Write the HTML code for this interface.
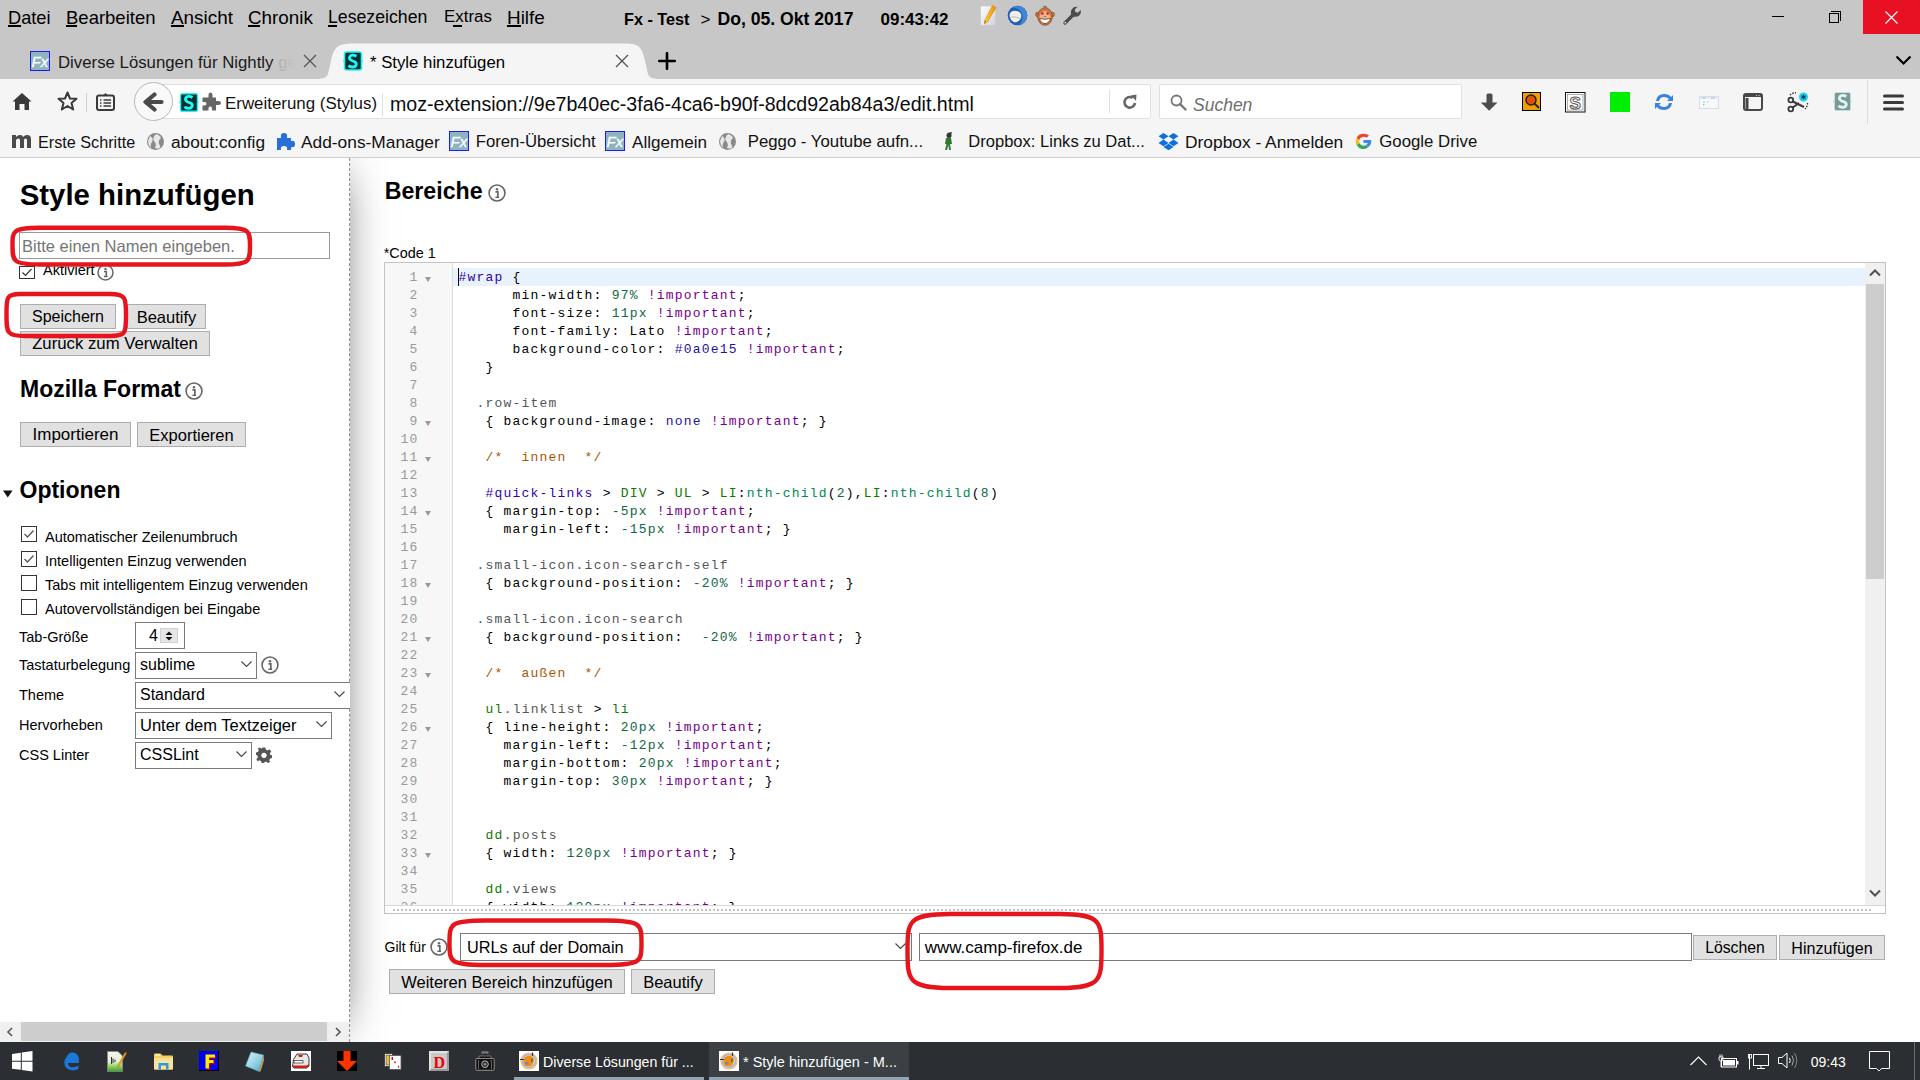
<!DOCTYPE html>
<html><head><meta charset="utf-8">
<style>
*{box-sizing:border-box}
html,body{margin:0;padding:0}
body{width:1920px;height:1080px;overflow:hidden;position:relative;background:#fff;font-family:"Liberation Sans",sans-serif;color:#000}
.a{position:absolute;white-space:nowrap}
.t{line-height:1}
#chrome{position:absolute;left:0;top:0;width:1920px;height:79px;background:#c7c7c7}
#tb{position:absolute;left:0;top:79px;width:1920px;height:79px;background:#f5f5f5;border-bottom:1px solid #cfcfcf}
#content{position:absolute;left:0;top:158px;width:1920px;height:884px;background:#fff}
#taskbar{position:absolute;left:0;top:1042px;width:1920px;height:38px;background:#2b2f33}
.menu{color:#000;top:9.2px}
.btn{position:absolute;background:#e1e1e1;border:1px solid #adadad;font-size:16px;line-height:24.5px;text-align:center;color:#000;white-space:nowrap}
.inp{position:absolute;background:#fff;border:1px solid #7a7a7a}
.code{font-family:"Liberation Mono",monospace;font-size:13px;line-height:18px;letter-spacing:1.2px}
.cb{position:absolute;width:16px;height:16px;border:1px solid #333;background:#fff}
.cb svg{position:absolute;left:0;top:0}
.opt{font-size:14.5px;color:#000}
.sel{font-size:16px;color:#000}
.fold{position:absolute;left:39.5px;width:0;height:0;border-left:3.2px solid transparent;border-right:3.2px solid transparent;border-top:5px solid #999}
.b{color:#30a}.n{color:#164}.k{color:#708}.at{color:#219}.q{color:#555}.tg{color:#170}.v3{color:#085}.cm{color:#a50}
#clip{position:absolute;left:0;top:0;width:1920px;height:1080px;clip-path:inset(158px 0 38px 0)}
</style></head>
<body>
<div id="chrome">
  <div class="a t menu" style="left:8px;font-size:18.2px">Datei</div>
  <div class="a t menu" style="left:66px;font-size:18.5px">Bearbeiten</div>
  <div class="a t menu" style="left:171px;font-size:18.9px">Ansicht</div>
  <div class="a t menu" style="left:248px;font-size:18.85px">Chronik</div>
  <div class="a t menu" style="left:328px;font-size:17.7px">Lesezeichen</div>
  <div class="a t menu" style="left:444px;font-size:16.9px">Extras</div>
  <div class="a t menu" style="left:507px;font-size:18.9px">Hilfe</div>
  <div class="a" style="left:8px;top:25px;width:13px;height:2px;background:#000"></div>
  <div class="a" style="left:66px;top:25px;width:11px;height:2px;background:#000"></div>
  <div class="a" style="left:171px;top:25px;width:13px;height:2px;background:#000"></div>
  <div class="a" style="left:248px;top:25px;width:12px;height:2px;background:#000"></div>
  <div class="a" style="left:328px;top:25px;width:9px;height:2px;background:#000"></div>
  <div class="a" style="left:453px;top:25px;width:9px;height:2px;background:#000"></div>
  <div class="a" style="left:507px;top:25px;width:14px;height:2px;background:#000"></div>
  <div class="a t" style="left:624px;top:10.6px;font-size:16.2px;font-weight:bold">Fx - Test</div>
  <div class="a t" style="left:700.5px;top:10.5px;font-size:17px">&gt;</div>
  <div class="a t" style="left:717.5px;top:10.6px;font-size:17.6px;font-weight:bold">Do, 05. Okt 2017</div>
  <div class="a t" style="left:880.5px;top:10.6px;font-size:17px;font-weight:bold">09:43:42</div>
  <!-- title icons -->
  <svg class="a" style="left:980px;top:5px" width="18" height="22" viewBox="0 0 18 22">
    <defs><linearGradient id="np" x1="0" y1="0" x2="1" y2="1"><stop offset="0" stop-color="#fff"/><stop offset="1" stop-color="#cfd3dc"/></linearGradient>
    <linearGradient id="pc" x1="0" y1="0" x2="1" y2="0"><stop offset="0" stop-color="#ffd23a"/><stop offset="1" stop-color="#f08a00"/></linearGradient></defs>
    <rect x="0.5" y="1" width="15" height="19.5" fill="url(#np)" stroke="#c5c9d2" stroke-width="0.8"/>
    <path d="M12.5 0.5 L16 2.5 L7.5 17 L4.5 19 L4.8 15.5 Z" fill="url(#pc)" stroke="#d77a00" stroke-width="0.5"/>
    <path d="M4.5 19 L4.8 15.5 L6 16.3 Z" fill="#8a5a30"/>
  </svg>
  <svg class="a" style="left:1007px;top:5px" width="21" height="21" viewBox="0 0 21 21">
    <circle cx="10.5" cy="10.5" r="9.8" fill="#1f5fb5"/>
    <path d="M10.5 0.7 A9.8 9.8 0 0 1 20.3 10.5 A9.8 9.8 0 0 1 12 20.2 Q17 15 15 9 Q13 3 6 2.5 Q8 0.7 10.5 0.7 Z" fill="#3f86d8"/>
    <path d="M2.5 10 Q3 6.5 6 6 Q9 5 12.5 7 Q15.5 9.5 13.5 14 Q11 18 7 17 Q3 15.5 2.5 10 Z" fill="#f2efe8"/>
    <path d="M3.5 12.5 Q7 11 10 12.5 Q12.5 13.5 13.5 14" fill="none" stroke="#b9b4aa" stroke-width="0.9"/>
  </svg>
  <svg class="a" style="left:1035px;top:5px" width="20" height="21" viewBox="0 0 20 21">
    <path d="M8 2 L9 0.5 L10 2 L11 0.5 L12 2.5 Z" fill="#8a4a20"/>
    <circle cx="2.8" cy="9.5" r="2.3" fill="#c87a45" stroke="#7a3d15" stroke-width="0.6"/>
    <circle cx="17.2" cy="9.5" r="2.3" fill="#c87a45" stroke="#7a3d15" stroke-width="0.6"/>
    <ellipse cx="10" cy="11.5" rx="7.3" ry="8.8" fill="#c87a45" stroke="#7a3d15" stroke-width="0.7"/>
    <ellipse cx="10" cy="12.5" rx="5.5" ry="6.5" fill="#e8b48a"/>
    <circle cx="7.3" cy="8.5" r="1.2" fill="#f01010"/><circle cx="12.7" cy="8.5" r="1.2" fill="#f01010"/>
    <path d="M9 11 H11 L10 12 Z" fill="#6a3510"/>
    <path d="M4.5 13.5 Q10 15 15.5 13.5 Q14 18.5 10 18.5 Q6 18.5 4.5 13.5 Z" fill="#fff" stroke="#6a3510" stroke-width="0.8"/>
  </svg>
  <svg class="a" style="left:1063px;top:6px" width="19" height="19" viewBox="0 0 19 19">
    <path d="M2 17 L10 9" stroke="#4a4a4a" stroke-width="3.2" stroke-linecap="round"/>
    <path d="M8.2 8.5 Q7 4 10.5 1.5 Q12.5 0.3 14.5 0.8 L11.8 3.5 L12.3 6 L14.8 6.8 L17.8 4 Q18.5 7 16.5 9.2 Q13.8 11.5 10.3 10.5 Z" fill="#4a4a4a"/>
    <circle cx="2.3" cy="16.7" r="0.9" fill="#ddd"/>
  </svg>
  <!-- window controls -->
  <div class="a" style="left:1772px;top:16px;width:12px;height:1px;background:#000"></div>
  <div class="a" style="left:1831px;top:11px;width:10px;height:10px;border:1px solid #000;border-left:none;border-bottom:none"></div>
  <div class="a" style="left:1829px;top:13px;width:10px;height:10px;border:1px solid #000;background:#c7c7c7"></div>
  <div class="a" style="left:1863px;top:0;width:57px;height:34px;background:#e81123"></div>
  <svg class="a" style="left:1885px;top:11px" width="13" height="13" viewBox="0 0 13 13"><path d="M0.5 0.5 L12.5 12.5 M12.5 0.5 L0.5 12.5" stroke="#fff" stroke-width="1.2"/></svg>
  <!-- tabs -->
  <svg class="a" style="left:30px;top:51px" width="20" height="20" viewBox="0 0 20 20">
    <rect x="0.5" y="0.5" width="19" height="19" fill="#8db4bf" stroke="#1a1aff" stroke-width="1"/>
    <text x="1.5" y="15.5" font-family="Liberation Sans" font-style="italic" font-size="15" fill="#fff" stroke="#fff" stroke-width="0.3">Fx</text>
  </svg>
  <div class="a t" style="left:58px;top:54.6px;font-size:16.8px;color:#1a1a1a">Diverse Lösungen für Nightly <span style="color:#b0b0b0">ge</span></div>
  <div class="a" style="left:280px;top:45px;width:20px;height:30px;background:linear-gradient(to right,rgba(199,199,199,0),#c7c7c7 80%)"></div>
  <svg class="a" style="left:303px;top:54px" width="14" height="14" viewBox="0 0 14 14"><path d="M1 1 L13 13 M13 1 L1 13" stroke="#555" stroke-width="1.3"/></svg>
  <svg class="a" style="left:300px;top:43px" width="380" height="36" viewBox="0 0 380 36">
    <path d="M15 36 C30 36 27 33 31 18 C34 4 38 0.5 52 0.5 L325 0.5 C339 0.5 342 4 345 18 C349 33 346 36 361 36 Z" fill="#f5f5f5"/>
  </svg>
  <svg class="a" style="left:343px;top:51px" width="20" height="20" viewBox="0 0 20 20">
    <rect x="1.5" y="1" width="17" height="18" rx="2" fill="#053030" stroke="#20f5f5" stroke-width="1.6"/>
    <path d="M0 10 L2 10 M18 10 L20 10" stroke="#20f5f5" stroke-width="1.6"/>
    <path d="M13.5 5.2 Q10.5 3.5 7.8 4.5 Q5.8 6 6.8 8.2 Q8 9.7 11 10.5 Q13.5 11.5 13.3 13.5 Q12.8 16 9.5 16 Q7 16 5.5 14.5" fill="none" stroke="#22f8f8" stroke-width="2.8"/>
  </svg>
  <div class="a t" style="left:370px;top:54.6px;font-size:16.75px;color:#000">* Style hinzufügen</div>
  <svg class="a" style="left:615px;top:54px" width="14" height="14" viewBox="0 0 14 14"><path d="M1 1 L13 13 M13 1 L1 13" stroke="#555" stroke-width="1.3"/></svg>
  <svg class="a" style="left:658px;top:52px" width="18" height="18" viewBox="0 0 18 18"><path d="M9 1.2 V16.8 M1.2 9 H16.8" stroke="#000" stroke-width="2.6" stroke-linecap="round"/></svg>
  <svg class="a" style="left:1895px;top:54px" width="17" height="12" viewBox="0 0 17 12"><path d="M1.5 2.5 L8.5 9.5 L15.5 2.5" fill="none" stroke="#000" stroke-width="2.2"/></svg>
</div>
<div id="tb">
  <!-- home -->
  <svg class="a" style="left:12px;top:13px" width="20" height="19" viewBox="0 0 20 19">
    <path d="M10 1 L19.5 9.5 L17 9.5 L17 18 L12.5 18 L12.5 12 L7.5 12 L7.5 18 L3 18 L3 9.5 L0.5 9.5 Z" fill="#3a3a3a"/>
  </svg>
  <!-- star -->
  <svg class="a" style="left:57px;top:12px" width="21" height="20" viewBox="0 0 21 20">
    <path d="M10.5 1.5 L13 7.5 L19.5 7.8 L14.5 12 L16.2 18.5 L10.5 15 L4.8 18.5 L6.5 12 L1.5 7.8 L8 7.5 Z" fill="none" stroke="#3a3a3a" stroke-width="2" stroke-linejoin="round"/>
  </svg>
  <div class="a" style="left:86px;top:14px;width:1px;height:19px;background:#cfcfcf"></div>
  <!-- library -->
  <svg class="a" style="left:96px;top:13px" width="19" height="19" viewBox="0 0 19 19">
    <rect x="1" y="3.5" width="17" height="14.5" rx="2" fill="none" stroke="#3a3a3a" stroke-width="2"/>
    <path d="M7 3.5 L9.5 1 L12 3.5" fill="#3a3a3a"/>
    <path d="M4 8 H5.5 M7.5 8 H15 M4 11 H5.5 M7.5 11 H15 M4 14 H5.5 M7.5 14 H15" stroke="#3a3a3a" stroke-width="1.6"/>
  </svg>
  <!-- url bar -->
  <div class="a" style="left:160px;top:5px;width:991px;height:35px;background:#fff;border:1px solid #e0e0e0;border-radius:2px"></div>
  <div class="a" style="left:134px;top:3px;width:39px;height:39px;border-radius:50%;background:#f9f9f9;border:1px solid #b9b9b9"></div>
  <svg class="a" style="left:140px;top:13px" width="26" height="22" viewBox="0 0 26 22">
    <path d="M14.5 2.5 L5.5 10 L14.5 17.5 M6.5 10 H21.5" fill="none" stroke="#4a4a4a" stroke-width="4.2" stroke-linecap="round" stroke-linejoin="round"/>
  </svg>
  <svg class="a" style="left:179px;top:14px" width="20" height="19" viewBox="0 0 20 19">
    <rect x="1.5" y="0.8" width="17" height="17.4" rx="1.5" fill="#053030" stroke="#20f5f5" stroke-width="1.4"/>
    <path d="M0 9 L2 9 M18 9 L20 9" stroke="#20f5f5" stroke-width="1.6"/>
    <path d="M13.5 4.5 Q10.5 2.8 7.8 3.8 Q5.8 5.2 6.8 7.5 Q8 9 11 9.8 Q13.5 10.8 13.3 12.8 Q12.8 15.3 9.5 15.3 Q7 15.3 5.5 13.8" fill="none" stroke="#22f8f8" stroke-width="2.8"/>
  </svg>
  <svg class="a" style="left:202px;top:13px" width="20" height="20" viewBox="0 0 20 20">
    <path d="M0.5 5.5 H6.5 V3 Q6.5 0.5 8.5 0.5 Q10.5 0.5 10.5 3 V5.5 H14 V9 H16.5 Q19 9 19 11 Q19 13 16.5 13 H14 V18.5 H10 V16.5 Q10 14.5 8.2 14.5 Q6.5 14.5 6.5 16.5 V18.5 H0.5 V13.5 H2.5 Q4.5 13.5 4.5 11.8 Q4.5 10 2.5 10 H0.5 Z" fill="#666"/>
  </svg>
  <div class="a t" style="left:225px;top:16.6px;font-size:16.9px;color:#111">Erweiterung (Stylus)</div>
  <div class="a" style="left:382px;top:14px;width:1px;height:24px;background:#e0e0e0"></div>
  <div class="a t" style="left:390px;top:15.6px;font-size:19.6px;color:#0c0c0d">moz-extension://9e7b40ec-3fa6-4ca6-b90f-8dcd92ab84a3/edit.html</div>
  <div class="a" style="left:1109px;top:11px;width:1px;height:23px;background:#e0e0e0"></div>
  <svg class="a" style="left:1122px;top:15px" width="16" height="16" viewBox="0 0 16 16">
    <path d="M13 9 A5.3 5.3 0 1 1 10.5 3.8" fill="none" stroke="#666" stroke-width="2.6"/>
    <path d="M8.5 1.5 L14.5 0.5 L14 6.8 Z" fill="#666"/>
  </svg>
  <!-- search -->
  <div class="a" style="left:1159px;top:5px;width:303px;height:35px;background:#fff;border:1px solid #e0e0e0;border-radius:2px"></div>
  <svg class="a" style="left:1170px;top:15px" width="17" height="17" viewBox="0 0 17 17">
    <circle cx="6.5" cy="6.5" r="5" fill="none" stroke="#777" stroke-width="1.8"/>
    <path d="M10 10 L15.5 15.5" stroke="#777" stroke-width="2.4" stroke-linecap="round"/>
  </svg>
  <div class="a t" style="left:1193px;top:18.2px;font-size:17.5px;font-style:italic;color:#6d6d6d">Suchen</div>
  <!-- right icons -->
  <svg class="a" style="left:1480px;top:14px" width="19" height="19" viewBox="0 0 19 19">
    <path d="M6.5 2 Q6.5 0.5 8 0.5 H11 Q12.5 0.5 12.5 2 V9.5 H17.5 L9.2 17.8 L0.8 9.5 H6.5 Z" fill="#4d4d4d"/>
  </svg>
  <svg class="a" style="left:1522px;top:13px" width="20" height="19" viewBox="0 0 20 19">
    <rect x="0.5" y="0.5" width="18" height="18" fill="#f0a000" stroke="#000" stroke-width="1"/>
    <circle cx="9" cy="8" r="5" fill="#e05000" stroke="#222" stroke-width="1.5"/>
    <path d="M12.5 11.5 L17 16" stroke="#222" stroke-width="2"/>
  </svg>
  <svg class="a" style="left:1565px;top:13px" width="21" height="21" viewBox="0 0 21 21">
    <rect x="0.5" y="0.5" width="19.5" height="19.5" fill="#fff" stroke="#111" stroke-width="1"/>
    <rect x="2.5" y="2.5" width="15.5" height="15.5" fill="none" stroke="#999" stroke-width="0.8"/>
    <text x="4.5" y="16.5" font-family="Liberation Sans" font-weight="bold" font-size="17" fill="#fff" stroke="#555" stroke-width="1">S</text>
  </svg>
  <div class="a" style="left:1610px;top:13px;width:20px;height:20px;background:#00ee00"></div>
  <svg class="a" style="left:1653px;top:13px" width="22" height="20" viewBox="0 0 22 20">
    <path d="M3 9 Q4 2 11 2 Q16 2 18 5 L20 3 L20 9 L14 9 L16 7 Q14 5 11 5 Q7 5 6 9 Z" fill="#3b82e0"/>
    <path d="M19 11 Q18 18 11 18 Q6 18 4 15 L2 17 L2 11 L8 11 L6 13 Q8 15 11 15 Q15 15 16 11 Z" fill="#3b82e0"/>
  </svg>
  <svg class="a" style="left:1699px;top:17px" width="20" height="13" viewBox="0 0 20 13">
    <rect x="0.5" y="0.5" width="19" height="12" fill="#f7f9fc" stroke="#d8dde6" stroke-width="1"/>
    <rect x="1" y="1" width="18" height="2" fill="#e3ecf8"/>
    <path d="M3 2 H7 M12 2 H16" stroke="#9ab5dd" stroke-width="0.8"/>
    <path d="M4 6 H6 M4 8.5 H5.5" stroke="#7fcf7f" stroke-width="1"/>
    <path d="M8 6 H10" stroke="#f0b0a0" stroke-width="0.8"/>
  </svg>
  <svg class="a" style="left:1743px;top:14px" width="20" height="18" viewBox="0 0 20 18">
    <rect x="1" y="1" width="18" height="16" rx="2" fill="none" stroke="#474747" stroke-width="2"/>
    <rect x="1" y="1" width="18" height="3" fill="#474747"/>
    <rect x="2.5" y="5" width="3" height="11" fill="#474747"/>
    <path d="M13 2.5 H14 M15.5 2.5 H16.5" stroke="#ddd" stroke-width="1"/>
  </svg>
  <svg class="a" style="left:1787px;top:13px" width="22" height="21" viewBox="0 0 22 21">
    <circle cx="3.8" cy="8" r="2.4" fill="none" stroke="#3a3a3a" stroke-width="1.8"/>
    <circle cx="3.8" cy="17" r="2.4" fill="none" stroke="#3a3a3a" stroke-width="1.8"/>
    <path d="M5.8 9.5 L17 15 M5.8 15.5 L12 11" stroke="#3a3a3a" stroke-width="2"/>
    <path d="M3 3 A9 9 0 0 1 9 0.8" fill="none" stroke="#3a3a3a" stroke-width="1.5" stroke-dasharray="1.5 1.2"/>
    <path d="M20.5 11 A9 9 0 0 1 18 17" fill="none" stroke="#3a3a3a" stroke-width="1.5" stroke-dasharray="1.5 1.2"/>
    <circle cx="16.5" cy="5" r="4.5" fill="#19d4f0"/>
    <path d="M16.5 2.6 V7.4 M14.4 3.8 L18.6 6.2 M14.4 6.2 L18.6 3.8" stroke="#0a3a50" stroke-width="1.1"/>
  </svg>
  <svg class="a" style="left:1833px;top:13px" width="19" height="19" viewBox="0 0 19 19">
    <rect x="1.5" y="0.5" width="16" height="18" rx="1.5" fill="#7d9896" stroke="#c8f0f0" stroke-width="0.6"/>
    <path d="M0 9.5 H1.5 M17.5 9.5 H19" stroke="#a8dcdc" stroke-width="1.4"/>
    <path d="M13.3 4.5 Q10.5 2.8 7.8 3.8 Q5.8 5.2 6.8 7.5 Q8 9 11 9.8 Q13.5 10.8 13.3 12.8 Q12.8 15.3 9.5 15.3 Q7 15.3 5.5 13.8" fill="none" stroke="#dff6f6" stroke-width="2.8"/>
  </svg>
  <div class="a" style="left:1867px;top:1px;width:1px;height:44px;background:#dcdcdc"></div>
  <svg class="a" style="left:1883px;top:15px" width="21" height="17" viewBox="0 0 21 17">
    <path d="M1.5 2 H19.5 M1.5 8.5 H19.5 M1.5 15 H19.5" stroke="#3a3a3a" stroke-width="3" stroke-linecap="round"/>
  </svg>
  <!-- bookmarks -->
  <svg class="a" style="left:11px;top:54px" width="21" height="16" viewBox="0 0 21 16">
    <path d="M1 15 V2 H5 V4 Q7 1.5 10 2 Q11.5 2.5 12 4 Q14 1.5 17 2 Q20 2.5 20 6 V15 H16 V7 Q16 5.5 14.5 5.5 Q13 5.5 13 7 V15 H9 V7 Q9 5.5 7.5 5.5 Q5 5.5 5 7.5 V15 Z" fill="#4a4a4a"/>
  </svg>
  <div class="a t" style="left:38px;top:55.4px;font-size:16.2px;color:#111">Erste Schritte</div>
  <svg class="a" style="left:146px;top:53px" width="19" height="19" viewBox="0 0 19 19">
    <circle cx="9.5" cy="9.5" r="8.5" fill="#8a8a8a"/>
    <path d="M4 4 Q8 6 6 10 Q4 12 5 16 Q2 13 2 9 Z M10 2 Q14 3 15 6 Q12 8 13 12 Q15 14 14 16 Q11 17 9 16 Q11 12 8 9 Q6 6 10 2 Z" fill="#e8e8e8"/>
  </svg>
  <div class="a t" style="left:171px;top:55.4px;font-size:17.25px;color:#111">about:config</div>
  <svg class="a" style="left:276px;top:53px" width="19" height="19" viewBox="0 0 19 19">
    <path d="M1 6 H5 Q4 1 8 1 Q12 1 11 6 H15 V9 Q19 8 19 12 Q19 16 15 15 V18 H11 Q12 14 8 14 Q4 14 5 18 H1 Z" fill="#2a6fd6"/>
  </svg>
  <div class="a t" style="left:301px;top:55.4px;font-size:17.33px;color:#111">Add-ons-Manager</div>
  <svg class="a" style="left:449px;top:52px" width="20" height="20" viewBox="0 0 20 20">
    <rect x="0.5" y="0.5" width="19" height="19" fill="#8db4bf" stroke="#1a1aff" stroke-width="1"/>
    <text x="1.5" y="15.5" font-family="Liberation Sans" font-style="italic" font-size="15" fill="#fff" stroke="#fff" stroke-width="0.3">Fx</text>
  </svg>
  <div class="a t" style="left:475.7px;top:55.4px;font-size:16.74px;color:#111">Foren-Übersicht</div>
  <svg class="a" style="left:605px;top:52px" width="20" height="20" viewBox="0 0 20 20">
    <rect x="0.5" y="0.5" width="19" height="19" fill="#8db4bf" stroke="#1a1aff" stroke-width="1"/>
    <text x="1.5" y="15.5" font-family="Liberation Sans" font-style="italic" font-size="15" fill="#fff" stroke="#fff" stroke-width="0.3">Fx</text>
  </svg>
  <div class="a t" style="left:632px;top:55.4px;font-size:17.08px;color:#111">Allgemein</div>
  <svg class="a" style="left:718px;top:53px" width="19" height="19" viewBox="0 0 19 19">
    <circle cx="9.5" cy="9.5" r="8.5" fill="#8a8a8a"/>
    <path d="M4 4 Q8 6 6 10 Q4 12 5 16 Q2 13 2 9 Z M10 2 Q14 3 15 6 Q12 8 13 12 Q15 14 14 16 Q11 17 9 16 Q11 12 8 9 Q6 6 10 2 Z" fill="#e8e8e8"/>
  </svg>
  <div class="a t" style="left:747.7px;top:55.4px;font-size:16.8px;color:#111">Peggo - Youtube aufn...</div>
  <svg class="a" style="left:941px;top:53px" width="15" height="19" viewBox="0 0 15 19">
    <circle cx="8" cy="3.5" r="2.5" fill="#333"/>
    <path d="M5 6 H10 L11 12 L9 12 L10 18 H8 L7.5 13 L6 18 H4 L5.5 12 L4 12 Z" fill="#2f7a2f"/>
    <path d="M6 1 L11 0 L10 3" fill="#333"/>
  </svg>
  <div class="a t" style="left:968.3px;top:55.4px;font-size:16.56px;color:#111">Dropbox: Links zu Dat...</div>
  <svg class="a" style="left:1158px;top:53px" width="21" height="19" viewBox="0 0 21 19">
    <path d="M5.5 1 L10.5 4.3 L5.5 7.6 L0.5 4.3 Z M15.5 1 L20.5 4.3 L15.5 7.6 L10.5 4.3 Z M5.5 7.6 L10.5 10.9 L5.5 14.2 L0.5 10.9 Z M15.5 7.6 L20.5 10.9 L15.5 14.2 L10.5 10.9 Z M5.5 15 L10.5 11.8 L15.5 15 L10.5 18.2 Z" fill="#0d6fe0"/>
  </svg>
  <div class="a t" style="left:1185px;top:55.4px;font-size:17.36px;color:#111">Dropbox - Anmelden</div>
  <svg class="a" style="left:1355px;top:54px" width="17" height="17" viewBox="0 0 17 17">
    <path d="M15.8 7 H8.5 V10 H12.7 Q11.8 13.5 8.5 13.5 Q4.5 13.5 4 8.5 Q4 3.5 8.5 3.3 Q10.5 3.3 11.8 4.6 L14 2.4 Q11.8 0.5 8.5 0.5" fill="none" stroke="#4285f4" stroke-width="0"/>
    <path d="M8.5 0.8 A7.7 7.7 0 0 0 1.6 5 L4.3 7 A4.7 4.7 0 0 1 11.7 4.8 L14 2.6 A7.7 7.7 0 0 0 8.5 0.8 Z" fill="#ea4335"/>
    <path d="M1.6 5 A7.7 7.7 0 0 0 1.6 12 L4.3 10 A4.7 4.7 0 0 1 4.3 7 Z" fill="#fbbc05"/>
    <path d="M1.6 12 A7.7 7.7 0 0 0 13.5 14 L11 12 A4.7 4.7 0 0 1 4.3 10 Z" fill="#34a853"/>
    <path d="M13.5 14 A7.7 7.7 0 0 0 16.2 7 H8.5 V10 H12.8 A4.7 4.7 0 0 1 11 12 Z" fill="#4285f4"/>
  </svg>
  <div class="a t" style="left:1379.3px;top:55.4px;font-size:16.79px;color:#111">Google Drive</div>
</div>
<div id="content"></div>
<div id="clip">
<!-- left panel -->
<div class="a" id="lp" style="left:0;top:158px;width:350px;height:884px;background:#fff;border-right:1px dashed #8e8e8e;box-shadow:0 0 48px -19px #000"></div>
<div class="a t" style="left:19.7px;top:180px;font-size:29.4px;font-weight:bold">Style hinzufügen</div>
<div class="inp" style="left:19px;top:232px;width:311px;height:27px;border-color:#999"></div>
<div class="a t" style="left:22px;top:237.6px;font-size:16.5px;color:#757575">Bitte einen Namen eingeben.</div>
<div class="a" style="left:19px;top:266px;width:16px;height:13px;border:1px solid #333;background:#fff"></div>
<svg class="a" style="left:21px;top:267px" width="12" height="11" viewBox="0 0 12 11"><path d="M1.5 5.5 L4.5 8.5 L10.5 2" fill="none" stroke="#333" stroke-width="1.2"/></svg>
<div class="a t" style="left:43px;top:263px;font-size:14.5px;color:#000">Aktiviert</div>
<svg class="a info" style="left:97px;top:264px" width="17" height="17" viewBox="0 0 17 17"><circle cx="8.5" cy="8.5" r="7.5" fill="none" stroke="#666" stroke-width="1.5"/><circle cx="8.5" cy="5" r="1.2" fill="#666"/><path d="M7 7.5 H9.3 V12 M7 12.5 H10.5" stroke="#666" stroke-width="1.6" fill="none"/></svg>

<div class="btn" style="left:20px;top:304px;width:96px;height:25px">Speichern</div>
<div class="btn" style="left:127px;top:304px;width:79px;height:25px;font-size:16.5px">Beautify</div>
<div class="btn" style="left:20px;top:331px;width:190px;height:25px;font-size:16.76px">Zurück zum Verwalten</div>

<div class="a t" style="left:20px;top:377.5px;font-size:23px;font-weight:bold">Mozilla Format</div>
<svg class="a info" style="left:185px;top:382px" width="18" height="18" viewBox="0 0 17 17"><circle cx="8.5" cy="8.5" r="7.5" fill="none" stroke="#666" stroke-width="1.5"/><circle cx="8.5" cy="5" r="1.2" fill="#666"/><path d="M7 7.5 H9.3 V12 M7 12.5 H10.5" stroke="#666" stroke-width="1.6" fill="none"/></svg>
<div class="btn" style="left:20px;top:422px;width:111px;height:25px;font-size:17px">Importieren</div>
<div class="btn" style="left:137px;top:422px;width:109px;height:25px;font-size:16.5px">Exportieren</div>

<svg class="a" style="left:3px;top:490px" width="10" height="8" viewBox="0 0 10 8"><path d="M0 0.5 H9.5 L4.75 7.5 Z" fill="#111"/></svg>
<div class="a t" style="left:19.5px;top:478.8px;font-size:23px;font-weight:bold">Optionen</div>

<div class="cb" style="left:21px;top:526px"><svg width="14" height="14" viewBox="0 0 14 14"><path d="M2.5 7 L5.5 10 L11.5 3.5" fill="none" stroke="#555" stroke-width="1.3"/></svg></div>
<div class="cb" style="left:21px;top:551px"><svg width="14" height="14" viewBox="0 0 14 14"><path d="M2.5 7 L5.5 10 L11.5 3.5" fill="none" stroke="#555" stroke-width="1.3"/></svg></div>
<div class="cb" style="left:21px;top:575px"></div>
<div class="cb" style="left:21px;top:599px"></div>
<div class="a t opt" style="left:45px;top:529.7px">Automatischer Zeilenumbruch</div>
<div class="a t opt" style="left:45px;top:554.4px">Intelligenten Einzug verwenden</div>
<div class="a t opt" style="left:45px;top:578px">Tabs mit intelligentem Einzug verwenden</div>
<div class="a t opt" style="left:45px;top:601.9px">Autovervollständigen bei Eingabe</div>

<div class="a t opt" style="left:19px;top:629.9px">Tab-Größe</div>
<div class="a t opt" style="left:19px;top:658px">Tastaturbelegung</div>
<div class="a t opt" style="left:19px;top:687.7px">Theme</div>
<div class="a t opt" style="left:19px;top:717.5px">Hervorheben</div>
<div class="a t opt" style="left:19px;top:747.5px">CSS Linter</div>

<div class="inp" style="left:135px;top:622px;width:50px;height:27px"></div>
<div class="a t sel" style="left:149px;top:627.5px">4</div>
<div class="a" style="left:160px;top:628px;width:18px;height:15px;background:#e6e6e6;border:1px solid #d0d0d0"></div>
<svg class="a" style="left:162px;top:629px" width="14" height="14" viewBox="0 0 14 14"><path d="M3.5 6 L7 2.5 L10.5 6 Z M3.5 8 L7 11.5 L10.5 8 Z" fill="#111"/></svg>

<div class="inp" style="left:135px;top:652px;width:122px;height:27px"></div>
<div class="a t sel" style="left:140px;top:656.6px">sublime</div>
<svg class="a chev" style="left:241px;top:661px" width="11" height="7" viewBox="0 0 11 7"><path d="M0.5 0.5 L5.5 5.5 L10.5 0.5" fill="none" stroke="#444" stroke-width="1.1"/></svg>
<svg class="a info" style="left:261px;top:656px" width="18" height="18" viewBox="0 0 17 17"><circle cx="8.5" cy="8.5" r="7.5" fill="none" stroke="#666" stroke-width="1.5"/><circle cx="8.5" cy="5" r="1.2" fill="#666"/><path d="M7 7.5 H9.3 V12 M7 12.5 H10.5" stroke="#666" stroke-width="1.6" fill="none"/></svg>

<div class="inp" style="left:135px;top:682px;width:215px;height:27px;border-right:none"></div>
<div class="a t sel" style="left:140px;top:686.6px">Standard</div>
<svg class="a chev" style="left:334px;top:691px" width="11" height="7" viewBox="0 0 11 7"><path d="M0.5 0.5 L5.5 5.5 L10.5 0.5" fill="none" stroke="#444" stroke-width="1.1"/></svg>

<div class="inp" style="left:135px;top:712px;width:197px;height:27px"></div>
<div class="a t sel" style="left:140px;top:716.6px;font-size:16.5px">Unter dem Textzeiger</div>
<svg class="a chev" style="left:316px;top:721px" width="11" height="7" viewBox="0 0 11 7"><path d="M0.5 0.5 L5.5 5.5 L10.5 0.5" fill="none" stroke="#444" stroke-width="1.1"/></svg>

<div class="inp" style="left:135px;top:742px;width:117px;height:27px"></div>
<div class="a t sel" style="left:140px;top:746.6px">CSSLint</div>
<svg class="a chev" style="left:236px;top:751px" width="11" height="7" viewBox="0 0 11 7"><path d="M0.5 0.5 L5.5 5.5 L10.5 0.5" fill="none" stroke="#444" stroke-width="1.1"/></svg>
<svg class="a" style="left:256px;top:747px" width="16" height="16" viewBox="0 0 16 16">
  <path d="M6.6 0.5 H9.4 L9.8 2.6 L11.5 3.5 L13.4 2.3 L15.3 4.4 L13.9 6.2 L14.4 7.9 L16 8.3 V11 L14.1 11.5 L13.3 13.2 L14.1 15 L11.8 16 L10.2 14.6 L8.5 15.2 L7.8 16 H5.6 L5.2 14.3 L3.4 13.3 L1.5 14.2 L0.4 12.1 L1.8 10.5 L1.5 8.6 L0 8 V5.5 L1.9 5 L2.8 3.3 L1.9 1.5 L4 0.4 L5.5 1.7 Z" fill="#555"/>
  <circle cx="8" cy="8.3" r="2.6" fill="#fff"/>
</svg>
<!-- scrollbar bottom of left panel -->
<div class="a" style="left:0;top:1022px;width:349px;height:20px;background:#f0f0f0"></div>
<div class="a" style="left:21px;top:1022px;width:306px;height:19px;background:#cdcdcd"></div>
<svg class="a" style="left:5px;top:1027px" width="10" height="10" viewBox="0 0 10 10"><path d="M7 1 L3 5 L7 9" fill="none" stroke="#555" stroke-width="1.6"/></svg>
<svg class="a" style="left:333px;top:1027px" width="10" height="10" viewBox="0 0 10 10"><path d="M3 1 L7 5 L3 9" fill="none" stroke="#555" stroke-width="1.6"/></svg>

<!-- right side -->
<div class="a t" style="left:384.7px;top:180.2px;font-size:23.2px;font-weight:bold">Bereiche</div>
<svg class="a info" style="left:488px;top:184px" width="18" height="18" viewBox="0 0 17 17"><circle cx="8.5" cy="8.5" r="7.5" fill="none" stroke="#666" stroke-width="1.5"/><circle cx="8.5" cy="5" r="1.2" fill="#666"/><path d="M7 7.5 H9.3 V12 M7 12.5 H10.5" stroke="#666" stroke-width="1.6" fill="none"/></svg>
<div class="a t" style="left:383.7px;top:245.8px;font-size:14.4px">*Code 1</div>

<div class="a" style="left:384px;top:262px;width:1502px;height:652px;border:1px solid #c3c3c3;background:#fff"></div>
<div class="a" style="left:385px;top:263px;width:68px;height:642px;background:#f7f7f7;border-right:1px solid #ddd"></div>
<div class="a" style="left:453px;top:268px;width:1412px;height:18px;background:#e8f2ff"></div>
<div class="a" style="left:458px;top:268px;width:1px;height:18px;background:#000"></div>
<div class="a" style="left:385px;top:263px;width:1480px;height:642px;overflow:hidden">
  <div class="a code lnum" style="left:0;top:5.5px;width:33.6px;text-align:right;white-space:pre;color:#999">1
2
3
4
5
6
7
8
9
10
11
12
13
14
15
16
17
18
19
20
21
22
23
24
25
26
27
28
29
30
31
32
33
34
35
36</div>
  <div class="fold" style="top:14px"></div><div class="fold" style="top:158px"></div><div class="fold" style="top:194px"></div><div class="fold" style="top:248px"></div><div class="fold" style="top:320px"></div><div class="fold" style="top:374px"></div><div class="fold" style="top:410px"></div><div class="fold" style="top:464px"></div><div class="fold" style="top:590px"></div><div class="fold" style="top:644px"></div>
  <div class="a code" style="left:73.6px;top:5.5px;white-space:pre;color:#000"><span class="b">#wrap</span> {
      min-width: <span class="n">97%</span> <span class="k">!important</span>;
      font-size: <span class="n">11px</span> <span class="k">!important</span>;
      font-family: Lato <span class="k">!important</span>;
      background-color: <span class="at">#0a0e15</span> <span class="k">!important</span>;
   }

  <span class="q">.row-item</span>
   { background-image: <span class="at">none</span> <span class="k">!important</span>; }

   <span class="cm">/*  innen  */</span>

   <span class="b">#quick-links</span> &gt; <span class="tg">DIV</span> &gt; <span class="tg">UL</span> &gt; <span class="tg">LI</span>:<span class="v3">nth-child</span>(<span class="n">2</span>),<span class="tg">LI</span>:<span class="v3">nth-child</span>(<span class="n">8</span>)
   { margin-top: <span class="n">-5px</span> <span class="k">!important</span>;
     margin-left: <span class="n">-15px</span> <span class="k">!important</span>; }

  <span class="q">.small-icon.icon-search-self</span>
   { background-position: <span class="n">-20%</span> <span class="k">!important</span>; }

  <span class="q">.small-icon.icon-search</span>
   { background-position:  <span class="n">-20%</span> <span class="k">!important</span>; }

   <span class="cm">/*  außen  */</span>

   <span class="tg">ul</span><span class="q">.linklist</span> &gt; <span class="tg">li</span>
   { line-height: <span class="n">20px</span> <span class="k">!important</span>;
     margin-left: <span class="n">-12px</span> <span class="k">!important</span>;
     margin-bottom: <span class="n">20px</span> <span class="k">!important</span>;
     margin-top: <span class="n">30px</span> <span class="k">!important</span>; }


   <span class="tg">dd</span><span class="q">.posts</span>
   { width: <span class="n">120px</span> <span class="k">!important</span>; }

   <span class="tg">dd</span><span class="q">.views</span>
   { width: <span class="n">120px</span> <span class="k">!important</span>; }</div>
</div>
<!-- editor scrollbar -->
<div class="a" style="left:1865px;top:263px;width:20px;height:642px;background:#f0f0f0"></div>
<div class="a" style="left:1866px;top:284px;width:18px;height:295px;background:#cdcdcd"></div>
<svg class="a" style="left:1869px;top:269px" width="12" height="8" viewBox="0 0 12 8"><path d="M1 6.5 L6 1.5 L11 6.5" fill="none" stroke="#505050" stroke-width="2"/></svg>
<svg class="a" style="left:1869px;top:889px" width="12" height="8" viewBox="0 0 12 8"><path d="M1 1.5 L6 6.5 L11 1.5" fill="none" stroke="#505050" stroke-width="2"/></svg>
<div class="a" style="left:385px;top:905px;width:1500px;height:1px;background:#d8d8d8"></div>
<div class="a" style="left:393px;top:909px;width:1480px;height:2px;background-image:linear-gradient(to right,#c4c4c4 50%,transparent 50%);background-size:4px 2px"></div>

<div class="a t" style="left:384.6px;top:939.7px;font-size:14px">Gilt für</div>
<svg class="a info" style="left:430px;top:938px" width="18" height="18" viewBox="0 0 17 17"><circle cx="8.5" cy="8.5" r="7.5" fill="none" stroke="#666" stroke-width="1.5"/><circle cx="8.5" cy="5" r="1.2" fill="#666"/><path d="M7 7.5 H9.3 V12 M7 12.5 H10.5" stroke="#666" stroke-width="1.6" fill="none"/></svg>
<div class="inp" style="left:460px;top:933px;width:452px;height:28px"></div>
<div class="a t sel" style="left:467px;top:938.5px;font-size:16.3px">URLs auf der Domain</div>
<svg class="a chev" style="left:895px;top:943px" width="11" height="7" viewBox="0 0 11 7"><path d="M0.5 0.5 L5.5 5.5 L10.5 0.5" fill="none" stroke="#444" stroke-width="1.1"/></svg>
<div class="inp" style="left:919px;top:933px;width:773px;height:28px"></div>
<div class="a t sel" style="left:924.7px;top:939.3px;font-size:17px">www.camp-firefox.de</div>
<div class="btn" style="left:1693px;top:935px;width:84px;height:25px;font-size:15.8px">Löschen</div>
<div class="btn" style="left:1779px;top:935px;width:106px;height:25px;font-size:16.1px">Hinzufügen</div>
<div class="btn" style="left:389px;top:969px;width:236px;height:25px;font-size:16.5px">Weiteren Bereich hinzufügen</div>
<div class="btn" style="left:631px;top:969px;width:84px;height:25px;font-size:16.5px">Beautify</div>

</div>
<!-- red annotations -->
<svg class="a" style="left:0;top:158px;pointer-events:none" width="1920" height="884" viewBox="0 158 1920 884">
  <g fill="none" stroke="#e6141c" stroke-width="4.4">
    <path d="M40 227.8 C12 228 12.5 231 12.5 246 C12.5 261 13 264.5 40 264.5 L225 264.5 C250 264.5 250 261 250 246 C250 231 250 228 225 227.8 Z"/>
    <path d="M20 294 C6 294 6.5 298 6.5 315 C6.5 333 7 336 25 336 L110 336 C126 336 126 333 126 315 C126 298 126 294 110 294 Z"/>
    <path d="M485 920.5 C450 920.5 449.5 924 449.5 943 C449.5 962 450 965 485 965 L605 965 C641 965 641.5 962 641.5 943 C641.5 924 641 920.5 605 920.5 Z"/>
    <path d="M950 914 C908 914 907.5 922 907.5 950 C907.5 980 908 988 950 988 L1060 988 C1101 988 1101.5 980 1101.5 950 C1101.5 922 1101 914 1060 914 Z"/>
  </g>
</svg>
<div id="taskbar">
  <svg class="a" style="left:12px;top:8.5px" width="21" height="21" viewBox="0 0 21 21">
    <path d="M0 3 L8.8 1.8 V9.8 H0 Z M9.8 1.6 L20.5 0 V9.8 H9.8 Z M0 10.8 H8.8 V18.8 L0 17.7 Z M9.8 10.8 H20.5 V20.5 L9.8 19 Z" fill="#fff"/>
  </svg>
  <svg class="a" style="left:62px;top:9.5px" width="18" height="19" viewBox="0 0 18 19">
    <path d="M17 11 H6 Q6.3 15 10.5 15.3 Q13.8 15.3 16.3 13.5 V17 Q13.5 18.5 10 18.3 Q2.5 17.8 2.3 10.5 Q2.6 6 6 4 Q4 6.5 4.5 8 Q6 5.5 9.5 5.5 Q12.5 5.5 12.5 8.5 H6.2 Q7 7.3 8.5 7.2 Q5 7 4.5 9.5 Q3.5 4.8 6.5 2 Q9 0.3 11.5 0.6 Q17.5 1.5 17 11 Z" fill="#1a78d6"/>
  </svg>
  <svg class="a" style="left:107px;top:9px" width="20" height="21" viewBox="0 0 20 21">
    <defs><linearGradient id="npp" x1="0" y1="0" x2="0" y2="1"><stop offset="0" stop-color="#f4f7ee"/><stop offset="0.5" stop-color="#e6efd8"/><stop offset="0.75" stop-color="#8fd060"/><stop offset="1" stop-color="#3aa02a"/></linearGradient></defs>
    <path d="M0.5 0.5 H11 L15.5 5 V20.5 H0.5 Z" fill="url(#npp)" stroke="#888" stroke-width="0.8"/>
    <path d="M4.5 6 V13 M6 7.5 V12 M8 8.5 V11" stroke="#333" stroke-width="1"/>
    <path d="M10 15.5 L18 1.5 L19.5 2.3 L11.5 16.3 Z" fill="#f2a81e" stroke="#a06a10" stroke-width="0.4"/>
    <path d="M18 1.5 L19.5 2.3 L20 1 L18.8 0.4 Z" fill="#d22"/>
  </svg>
  <svg class="a" style="left:154px;top:10.5px" width="19" height="17" viewBox="0 0 19 17">
    <path d="M0 1.5 Q0 0.5 1 0.5 H6.5 L8.5 2.5 H18 Q19 2.5 19 3.5 V15.5 Q19 16.5 18 16.5 H1 Q0 16.5 0 15.5 Z" fill="#f5cf5e"/>
    <path d="M0 5 H19 V15.5 Q19 16.5 18 16.5 H1 Q0 16.5 0 15.5 Z" fill="#fbe29a"/>
    <path d="M1.5 1.5 H6 V2.5 H1.5 Z" fill="#fff"/>
    <path d="M4.5 16.5 V10 H14.5 V16.5 H12 V12.5 H7 V16.5 Z" fill="#2a9ae6"/>
  </svg>
  <div class="a" style="left:199px;top:9px;width:20px;height:20px;background:#0000f0;border-right:1px solid #000;border-bottom:1px solid #000"></div>
  <svg class="a" style="left:199px;top:9px" width="20" height="20" viewBox="0 0 20 20">
    <path d="M6.5 3.5 H16 V6.5 H10 V9 H14.5 V12 H10 V17.5 H6.5 Z" fill="#d00000" transform="translate(1.2 1.2)"/>
    <path d="M6.5 3.5 H16 V6.5 H10 V9 H14.5 V12 H10 V17.5 H6.5 Z" fill="#ffee00"/>
  </svg>
  <svg class="a" style="left:245px;top:9px" width="19" height="21" viewBox="0 0 19 21">
    <defs><linearGradient id="np2" x1="0" y1="0" x2="1" y2="1"><stop offset="0" stop-color="#dff4fb"/><stop offset="0.6" stop-color="#8ccde0"/><stop offset="1" stop-color="#4c9fbd"/></linearGradient></defs>
    <path d="M6 1 L18.5 4 L14 20.5 L0.5 15 Z" fill="url(#np2)" stroke="#5a9fb8" stroke-width="0.6"/>
    <path d="M14 20.5 L18.5 4 L19 9 L15.5 20.5 Z" fill="#c8a45a"/>
  </svg>
  <svg class="a" style="left:291px;top:9px" width="20" height="20" viewBox="0 0 20 20">
    <rect x="0" y="0" width="20" height="20" fill="#fff"/>
    <path d="M2.5 8.5 L6 3 H16 L18 7 V15 L15.5 17 H3 L1.5 15.5 Z" fill="#e8e8e8" stroke="#222" stroke-width="0.9"/>
    <path d="M1.5 14.5 H15.5 L18 13 V15 L15.5 17 H3 Z" fill="#d21a1a"/>
    <path d="M7 4 H12 L11 6 H8 Z" fill="#d21a1a"/>
    <rect x="3" y="9.5" width="9" height="2.5" fill="#fff" stroke="#333" stroke-width="0.7"/>
  </svg>
  <div class="a" style="left:337px;top:9px;width:20px;height:20px;background:#000"></div>
  <svg class="a" style="left:337px;top:9px" width="20" height="20" viewBox="0 0 20 20"><path d="M6.5 0 H13.5 V10 H20 L10 20 L0 10 H6.5 Z" fill="#ff3300"/></svg>
  <svg class="a" style="left:384px;top:10.5px" width="18" height="17" viewBox="0 0 18 17">
    <rect x="0.5" y="0.5" width="8" height="13" fill="#fff" stroke="#333" stroke-width="0.8"/>
    <rect x="2" y="2" width="5" height="10" fill="#e8c040" stroke="#222" stroke-width="0.5"/>
    <rect x="5.5" y="2.5" width="11.5" height="14" fill="#fff" stroke="#555" stroke-width="0.8"/>
    <path d="M7.5 4 H9 V7 H7.5 Z M11 8 L12 9.3 L11 10.6 L10 9.3 Z M14.5 12.5 L15.3 13.7 L14.5 14.9 L13.7 13.7 Z" fill="#e00"/>
  </svg>
  <svg class="a" style="left:429px;top:9px" width="20" height="20" viewBox="0 0 20 20">
    <rect x="0" y="0" width="20" height="20" fill="#9a9a9a"/>
    <path d="M0 0 H20 L18 2 H2 V18 L0 20 Z" fill="#e2e2e2"/>
    <rect x="2" y="2" width="16" height="16" fill="#c9c9c9"/>
    <text x="4.5" y="16.5" font-family="Liberation Serif" font-weight="bold" font-size="16" fill="#ee0000">D</text>
  </svg>
  <svg class="a" style="left:475px;top:9px" width="20" height="20" viewBox="0 0 20 20">
    <rect x="6.5" y="0.3" width="7" height="2.5" fill="#777"/>
    <rect x="8.5" y="2.8" width="3" height="2" fill="#222"/>
    <rect x="0.8" y="7.5" width="18.4" height="11.8" rx="1" fill="#111" stroke="#aaa" stroke-width="0.8"/>
    <path d="M4 5 H16 V7.5 H4 Z" fill="#111" stroke="#aaa" stroke-width="0.6"/>
    <circle cx="10" cy="13.2" r="3.3" fill="#222" stroke="#ccc" stroke-width="0.9"/>
    <circle cx="10" cy="13.2" r="1.5" fill="#888"/>
    <path d="M3.5 9 V18 M16.5 9 V18" stroke="#999" stroke-width="0.6"/>
    <rect x="15.2" y="9" width="1.3" height="1.2" fill="#e00"/>
  </svg>
  <!-- task buttons -->
  <div class="a" style="left:514px;top:35px;width:190px;height:3px;background:#93a3b0"></div>
  <div class="a" style="left:709px;top:0;width:200px;height:38px;background:#3a4044"></div>
  <div class="a" style="left:709px;top:35px;width:200px;height:3px;background:#93a3b0"></div>
  <svg class="a" style="left:519px;top:9px" width="20" height="20" viewBox="0 0 20 20">
    <rect x="0" y="0" width="20" height="20" fill="#fff"/>
    <circle cx="10" cy="10" r="8" fill="none" stroke="#f5b060" stroke-width="1.2"/>
    <circle cx="10" cy="10" r="6.5" fill="none" stroke="#9fb4d0" stroke-width="1.6"/>
    <path d="M4.5 9 Q5.5 5 10 4.5 Q14.5 5 15 9 Q15 14 11 15.5 Q6 16 4.5 12 Z" fill="#f08c10"/>
    <path d="M1 8.5 H5 M13.5 1.5 V5" stroke="#333" stroke-width="1.2"/>
    <ellipse cx="7.8" cy="12.3" rx="1.6" ry="1.2" fill="#5a8ad8"/>
    <rect x="12" y="7.5" width="2" height="3.5" fill="#8a6a40"/>
  </svg>
  <div class="a t" style="left:543px;top:12.8px;font-size:14.2px;color:#fff">Diverse Lösungen für ...</div>
  <svg class="a" style="left:719px;top:9px" width="20" height="20" viewBox="0 0 20 20">
    <rect x="0" y="0" width="20" height="20" fill="#fff"/>
    <circle cx="10" cy="10" r="8" fill="none" stroke="#f5b060" stroke-width="1.2"/>
    <circle cx="10" cy="10" r="6.5" fill="none" stroke="#9fb4d0" stroke-width="1.6"/>
    <path d="M4.5 9 Q5.5 5 10 4.5 Q14.5 5 15 9 Q15 14 11 15.5 Q6 16 4.5 12 Z" fill="#f08c10"/>
    <path d="M1 8.5 H5 M13.5 1.5 V5" stroke="#333" stroke-width="1.2"/>
    <ellipse cx="7.8" cy="12.3" rx="1.6" ry="1.2" fill="#5a8ad8"/>
    <rect x="12" y="7.5" width="2" height="3.5" fill="#8a6a40"/>
  </svg>
  <div class="a t" style="left:743px;top:12.8px;font-size:14.5px;color:#fff">* Style hinzufügen - M...</div>
  <!-- tray -->
  <svg class="a" style="left:1690px;top:14px" width="17" height="10" viewBox="0 0 17 10"><path d="M0.5 9 L8.5 1 L16.5 9" fill="none" stroke="#fff" stroke-width="1.1"/></svg>
  <svg class="a" style="left:1718px;top:12px" width="21" height="14" viewBox="0 0 21 14">
    <rect x="3.5" y="4.5" width="15" height="8.5" fill="none" stroke="#fff" stroke-width="1"/>
    <rect x="5" y="6" width="12" height="5.5" fill="#fff"/>
    <rect x="18.5" y="7" width="2" height="3.5" fill="#fff"/>
    <path d="M2 0.5 V3 M4 0.5 V3 M1 3 H5 V5 Q5 7 3 7 Q1 7 1 5 Z M3 7 V13" stroke="#fff" stroke-width="0.9" fill="none"/>
  </svg>
  <svg class="a" style="left:1748px;top:11px" width="21" height="17" viewBox="0 0 21 17">
    <rect x="5.5" y="1.5" width="15" height="11" fill="none" stroke="#fff" stroke-width="1"/>
    <path d="M13 12.5 V15.5 M9 15.5 H17 M1.5 1 V16.5" stroke="#fff" stroke-width="1"/>
    <rect x="0.5" y="1.5" width="3" height="3.5" fill="none" stroke="#fff" stroke-width="0.9"/>
  </svg>
  <svg class="a" style="left:1778px;top:10px" width="21" height="17" viewBox="0 0 21 17">
    <path d="M0.5 5.5 H4 L9 1 V16 L4 11.5 H0.5 Z" fill="none" stroke="#fff" stroke-width="1"/>
    <path d="M11.5 6 Q13 8.5 11.5 11" fill="none" stroke="#fff" stroke-width="1"/>
    <path d="M14 3.5 Q17 8.5 14 13.5" fill="none" stroke="#aaa" stroke-width="1"/>
    <path d="M16.5 1 Q21 8.5 16.5 16" fill="none" stroke="#888" stroke-width="1"/>
  </svg>
  <div class="a t" style="left:1810.8px;top:12.6px;font-size:14px;color:#fff">09:43</div>
  <svg class="a" style="left:1869px;top:9px" width="21" height="21" viewBox="0 0 21 21">
    <path d="M0.5 0.5 H20.5 V17.5 H12.5 L10 20 L7.5 17.5 H0.5 Z" fill="none" stroke="#fff" stroke-width="1"/>
  </svg>
  <div class="a" style="left:1914px;top:0;width:1px;height:38px;background:#6a6e72"></div>
</div>

</body></html>
